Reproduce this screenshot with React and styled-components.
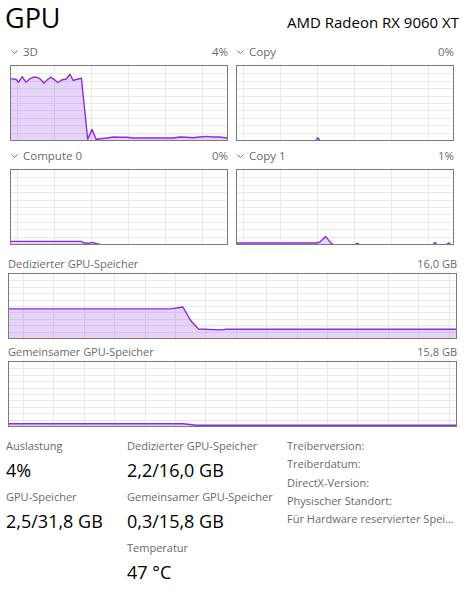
import React from "react";
import styled, { createGlobalStyle } from "styled-components";

const GlobalStyle = createGlobalStyle`
  html, body {
    margin: 0;
    padding: 0;
    background: #fff;
  }
  body {
    font-family: "Open Sans", "Noto Sans", sans-serif;
    color: #000;
  }
`;

const LINE = "#8b2be2";
const AREA = "rgba(150, 80, 230, 0.25)";

const Page = styled.div`
  width: 475px;
  height: 600px;
  overflow: hidden;
`;

const Header = styled.div`
  display: flex;
  justify-content: space-between;
  align-items: baseline;
  height: 43px;
  padding: 0 16px 0 5px;
  box-sizing: border-box;
`;

const Title = styled.h1`
  margin: 0;
  font-size: 27px;
  font-weight: 400;
  line-height: 36px;
`;

const Model = styled.div`
  font-size: 15px;
  line-height: 36px;
`;

const EngineGrid = styled.div`
  display: grid;
  grid-template-columns: 218px 218px;
  column-gap: 8px;
  row-gap: 6px;
  padding-left: 10px;
`;

const Panel = styled.div`
  display: flex;
  flex-direction: column;
`;

const PanelHead = styled.div`
  display: flex;
  align-items: center;
  height: 18px;
  margin-bottom: 4px;
  font-size: 11.5px;
  line-height: 18px;
  color: #6a6a6a;
`;

const Chevron = styled.svg`
  margin: 0 5px 0 1px;
  flex: none;
`;

const Grow = styled.span`
  flex: 1;
`;

const ChartBox = styled.div`
  height: ${(p) => p.$h}px;
  border: 1px solid #7a7a7a;
  box-sizing: border-box;
  background: #fff;

  svg {
    display: block;
  }
`;

const Memory = styled.div`
  display: flex;
  flex-direction: column;
  gap: 4px;
  padding: 10px 18px 0 8px;
`;

const MemBlock = styled.div`
  display: flex;
  flex-direction: column;
`;

const MemHead = styled.div`
  display: flex;
  justify-content: space-between;
  height: 18px;
  font-size: 11px;
  line-height: 18px;
  color: #6a6a6a;
`;

const Stats = styled.div`
  display: grid;
  grid-template-columns: 121px 160px 1fr;
  padding: 10px 18px 0 6px;
`;

const StatCol = styled.div`
  display: flex;
  flex-direction: column;
  gap: 6px;
`;

const Stat = styled.div`
  display: flex;
  flex-direction: column;
  gap: 3px;
`;

const StatLabel = styled.div`
  font-size: 11px;
  line-height: 18px;
  color: #6a6a6a;
  white-space: nowrap;
`;

const StatValue = styled.div`
  font-size: 18px;
  line-height: 24px;
  color: #000;
  white-space: nowrap;
`;

const Details = styled.div`
  display: flex;
  flex-direction: column;
  min-width: 0;
`;

const DetailRow = styled.div`
  font-size: 11px;
  line-height: 18.3px;
  color: #6a6a6a;
  white-space: nowrap;
  overflow: hidden;
  text-overflow: ellipsis;
`;

function Chart({ w, h, step, offset, series = [] }) {
  const iw = w - 2;
  const ih = h - 2;
  const vlines = [];
  for (let x = offset; x < iw; x += step) vlines.push(Math.round(x) + 0.5);
  const hlines = [];
  for (let i = 1; i < 10; i++) hlines.push(Math.round((ih * i) / 10) + 0.5);

  const toPts = (pts) =>
    pts.map(([x, v]) => `${(x * iw).toFixed(1)},${(ih - v * ih).toFixed(1)}`);

  return (
    <ChartBox $h={h}>
      <svg width={iw} height={ih} viewBox={`0 0 ${iw} ${ih}`}>
        <g stroke="#e9e9e9" strokeWidth="1" shapeRendering="crispEdges">
          {vlines.map((x) => (
            <line key={"v" + x} x1={x} y1={0} x2={x} y2={ih} />
          ))}
          {hlines.map((y) => (
            <line key={"h" + y} x1={0} y1={y} x2={iw} y2={y} />
          ))}
        </g>
        {series.map((pts, i) => {
          const p = toPts(pts);
          const first = (pts[0][0] * iw).toFixed(1);
          const last = (pts[pts.length - 1][0] * iw).toFixed(1);
          return (
            <g key={i}>
              <polygon points={`${first},${ih} ${p.join(" ")} ${last},${ih}`} fill={AREA} />
              <polyline points={p.join(" ")} fill="none" stroke={LINE} strokeWidth="1.4" strokeLinejoin="round" />
            </g>
          );
        })}
      </svg>
    </ChartBox>
  );
}

const blip = (x, v) => [
  [x - 0.008, 0],
  [x, v],
  [x + 0.008, 0],
];

const engines = [
  {
    name: "3D",
    pct: "4%",
    series: [
      [
        [0, 0.826], [0.023, 0.821], [0.035, 0.781], [0.052, 0.857], [0.069, 0.781],
        [0.086, 0.826], [0.104, 0.848], [0.119, 0.848], [0.135, 0.826], [0.153, 0.772],
        [0.168, 0.813], [0.184, 0.848], [0.202, 0.813], [0.217, 0.777], [0.236, 0.813],
        [0.254, 0.821], [0.273, 0.888], [0.288, 0.804], [0.306, 0.821], [0.326, 0.835],
        [0.355, 0.009], [0.375, 0.143], [0.394, 0.009], [0.413, 0.018], [0.444, 0.027],
        [0.475, 0.04], [0.505, 0.036], [0.536, 0.036], [0.567, 0.027], [0.628, 0.027],
        [0.689, 0.027], [0.75, 0.027], [0.781, 0.04], [0.812, 0.036], [0.842, 0.031],
        [0.873, 0.04], [0.911, 0.049], [0.934, 0.04], [0.965, 0.04], [1, 0.027],
      ],
    ],
  },
  { name: "Copy", pct: "0%", series: [blip(0.374, 0.03)] },
  {
    name: "Compute 0",
    pct: "0%",
    series: [
      [
        [0, 0.035], [0.326, 0.035], [0.337, 0.013], [0.36, 0.009],
        [0.375, 0.022], [0.398, 0.004], [0.41, 0],
      ],
    ],
  },
  {
    name: "Copy 1",
    pct: "1%",
    series: [
      [[0, 0.013], [0.366, 0.013], [0.385, 0.03], [0.41, 0.1], [0.438, 0.005], [0.445, 0]],
      blip(0.557, 0.01),
      blip(0.917, 0.02),
      blip(0.98, 0.015),
    ],
  },
];

const dedicated = [
  [[0, 0.455], [0.361, 0.455], [0.389, 0.485], [0.407, 0.268], [0.424, 0.141],
   [0.472, 0.126], [0.487, 0.136], [1, 0.136]],
];

const shared = [
  [[0, 0.036], [0.389, 0.036], [0.42, 0.012], [1, 0.012]],
];

const ChevronIcon = () => (
  <Chevron width="7" height="4" viewBox="0 0 7 4">
    <polyline points="0.5,0.5 3.5,3.5 6.5,0.5" fill="none" stroke="#777" strokeWidth="1" />
  </Chevron>
);

export default function App() {
  return (
    <Page>
      <GlobalStyle />
      <Header>
        <Title>GPU</Title>
        <Model>AMD Radeon RX 9060 XT</Model>
      </Header>

      <EngineGrid>
        {engines.map((e) => (
          <Panel key={e.name}>
            <PanelHead>
              <ChevronIcon />
              <Grow>{e.name}</Grow>
              <span>{e.pct}</span>
            </PanelHead>
            <Chart w={218} h={76} step={37} offset={6} series={e.series} />
          </Panel>
        ))}
      </EngineGrid>

      <Memory>
        <MemBlock>
          <MemHead>
            <span>Dedizierter GPU-Speicher</span>
            <span>16,0 GB</span>
          </MemHead>
          <Chart w={449} h={66} step={30.4} offset={14} series={dedicated} />
        </MemBlock>
        <MemBlock>
          <MemHead>
            <span>Gemeinsamer GPU-Speicher</span>
            <span>15,8 GB</span>
          </MemHead>
          <Chart w={449} h={66} step={30.4} offset={14} series={shared} />
        </MemBlock>
      </Memory>

      <Stats>
        <StatCol>
          <Stat>
            <StatLabel>Auslastung</StatLabel>
            <StatValue>4%</StatValue>
          </Stat>
          <Stat>
            <StatLabel>GPU-Speicher</StatLabel>
            <StatValue>2,5/31,8 GB</StatValue>
          </Stat>
        </StatCol>
        <StatCol>
          <Stat>
            <StatLabel>Dedizierter GPU-Speicher</StatLabel>
            <StatValue>2,2/16,0 GB</StatValue>
          </Stat>
          <Stat>
            <StatLabel>Gemeinsamer GPU-Speicher</StatLabel>
            <StatValue>0,3/15,8 GB</StatValue>
          </Stat>
          <Stat>
            <StatLabel>Temperatur</StatLabel>
            <StatValue>47 °C</StatValue>
          </Stat>
        </StatCol>
        <Details>
          <DetailRow>Treiberversion:</DetailRow>
          <DetailRow>Treiberdatum:</DetailRow>
          <DetailRow>DirectX-Version:</DetailRow>
          <DetailRow>Physischer Standort:</DetailRow>
          <DetailRow>Für Hardware reservierter Speicher:</DetailRow>
        </Details>
      </Stats>
    </Page>
  );
}
